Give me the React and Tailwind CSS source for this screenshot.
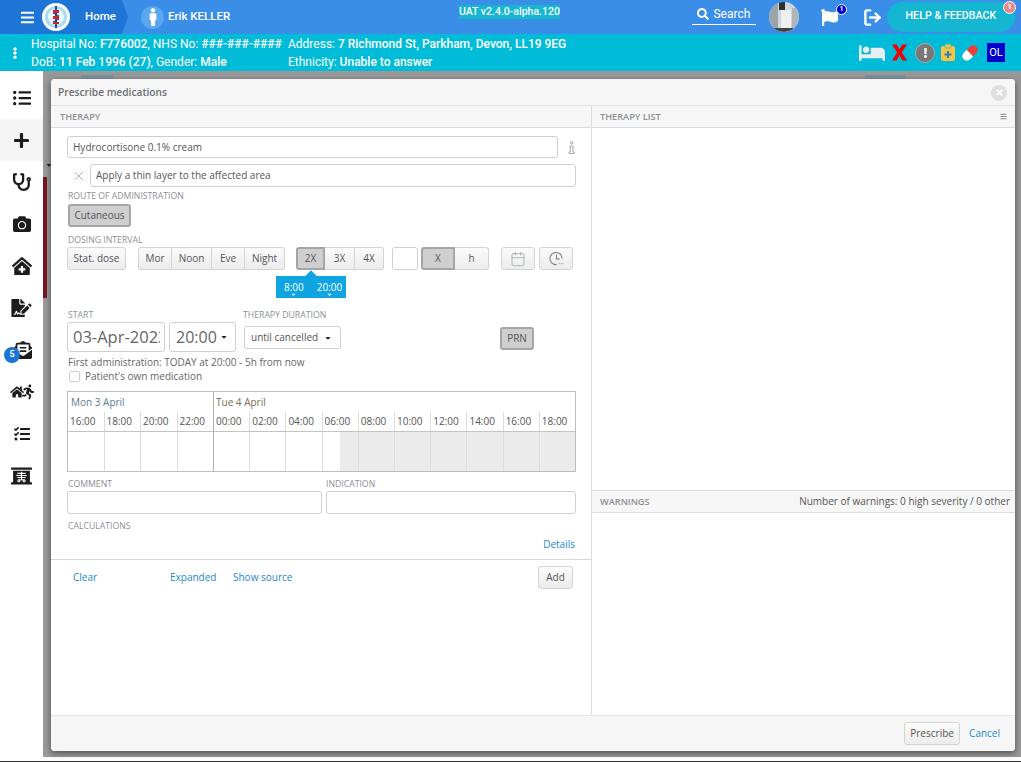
import { FaBars, FaBed, FaCamera, FaClinicMedical, FaFileSignature, FaFlag, FaHome, FaListUl, FaMale, FaPlus, FaRunning, FaSearch, FaStethoscope, FaTasks, FaXRay, FaEnvelopeOpenText, FaTimes, FaExclamation, FaEllipsisV, FaCaretDown } from "react-icons/fa";
import { LuLogOut, LuCalendar, LuX } from "react-icons/lu";

const times = ["16:00", "18:00", "20:00", "22:00", "00:00", "02:00", "04:00", "06:00", "08:00", "10:00", "12:00", "14:00", "16:00", "18:00"];

const btn = "h-[23px] flex items-center justify-center border border-[#d4d4d4] bg-gradient-to-b from-[#fbfbfb] to-[#ececec] text-[#555] text-[10px]";
const btnOn = "h-[23px] flex items-center justify-center border-2 border-[#a5a5a5] bg-[#cfcfcf] text-[#555] text-[10px]";
const label = "text-[8.7px] leading-[12px] pl-[1px] text-[#8b8f96] uppercase";
const input = "border border-[#cfcfcf] rounded-[3px] bg-white text-[#555] text-[10px]";

function Logo() {
  return (
    <svg viewBox="0 0 28 28" className="w-[28px] h-[28px] shrink-0">
      <circle cx="14" cy="14" r="14" fill="#fff" />
      <circle cx="14" cy="14" r="11" fill="#a8dcf2" />
      <circle cx="14" cy="14" r="8" fill="#eaf7fc" />
      <rect x="13" y="3" width="2" height="22" fill="#1f4e8c" />
      <path d="M11 7h6v3h-6zM11 13h6v3h-6zM11 19h6v2h-6z" fill="#d3202f" />
      <path d="M11 10l6 3M17 16l-6 3" stroke="#1f4e8c" strokeWidth="1.200" />
    </svg>
  );
}

function Avatar() {
  return (
    <svg viewBox="0 0 30 30" className="w-[30px] h-[30px] shrink-0 rounded-full">
      <rect width="30" height="30" fill="#cfd6da" />
      <rect x="0" y="0" width="9" height="30" fill="#9aa5ab" />
      <rect x="10" y="0" width="6" height="8" fill="#2b3236" />
      <rect x="12" y="8" width="10" height="22" fill="#eef1f2" />
      <rect x="23" y="6" width="7" height="24" fill="#aeb8bc" />
      <rect x="4" y="26" width="20" height="4" fill="#444" />
    </svg>
  );
}

function Pill() {
  return (
    <svg viewBox="0 0 20 20" className="w-[18px] h-[18px] ml-[6px]">
      <g transform="rotate(-45 10 10)">
        <path d="M5 5h5v10H5a5 5 0 0 1 0-10z" fill="#fff" />
        <path d="M10 5h5a5 5 0 0 1 0 10h-5z" fill="#ef3e36" />
      </g>
    </svg>
  );
}

function ClipboardPlus() {
  return (
    <svg viewBox="0 0 14 17" className="w-[14px] h-[17px] ml-[6px]">
      <rect x="0" y="2" width="14" height="15" rx="2" fill="#f5c542" />
      <rect x="4" y="0" width="6" height="4" rx="1" fill="#f5c542" stroke="#00bcd8" strokeWidth=".6" />
      <path d="M6 7h2v2.500h2.500v2H8V14H6v-2.500H3.500v-2H6z" fill="#2a7fb8" />
    </svg>
  );
}

function RedX() {
  return (
    <svg viewBox="0 0 16 17" className="w-[15px] h-[17px] ml-[7px]">
      <path d="M0 0h5l3 5 3-5h5l-5.500 8.500L16 17h-5l-3-5.500L5 17H0l5.500-8.500z" fill="#f00000" />
    </svg>
  );
}

function InfoOutline() {
  return (
    <svg viewBox="0 0 7 13" className="ml-[10px] w-[7px] h-[13px]" fill="none" stroke="#a8a8a8" strokeWidth="1">
      <circle cx="3.800" cy="1.800" r="1.300" />
      <path d="M2 5h3v6h1.200v1.500H1V11h1.300V6.500H2z" />
    </svg>
  );
}

function ClockDots() {
  return (
    <svg viewBox="0 0 16 16" className="w-[15px] h-[15px]" fill="none" stroke="#777" strokeWidth="1.100">
      <path d="M14 8a6.500 6.500 0 1 0-6 6.500" />
      <path d="M8 4v4.500h3.500" />
      <path d="M10.500 13.500h.8M12.500 13.500h.8M14.500 13.500h.8" strokeWidth="1" />
    </svg>
  );
}

function Header() {
  return (
    <div className="h-[34px] bg-[#3a8ee8] flex items-center text-white font-['Roboto',sans-serif] shrink-0">
      <div className="h-full w-[128px] bg-[#1e75d6] flex items-center pl-[20px] shrink-0 [clip-path:polygon(0_0,122px_0,128px_50%,122px_100%,0_100%)]">
        <FaBars className="w-[15px] h-[15px] mr-[7px]" />
        <Logo />
        <span className="ml-[15px] text-[11.5px] font-medium">Home</span>
      </div>
      <div className="ml-[13px] w-[23px] h-[23px] rounded-full bg-[#5aa7f0] flex items-center justify-center">
        <FaMale className="w-[16px] h-[18px]" />
      </div>
      <span className="ml-[4px] text-[11.5px] font-medium w-[291px]">Erik KELLER</span>
      <span className="mb-[10px] text-[10.500px] font-medium bg-[#14b6d2] leading-[14px]">UAT v2.4.0-alpha.120</span>
      <div className="ml-[132px] mb-[6px] w-[64px] h-[21px] border-b border-white flex items-center justify-center gap-[4px] text-[12px]">
        <FaSearch className="w-[12px] h-[12px]" />
        Search
      </div>
      <div className="ml-[13px]"><Avatar /></div>
      <div className="ml-[22px] relative">
        <FaFlag className="w-[17px] h-[17px]" />
        <span className="absolute -top-[5px] -right-[9px] w-[11px] h-[11px] rounded-full bg-[#0000d0] border border-white text-[7px] font-bold flex items-center justify-center">1</span>
      </div>
      <LuLogOut className="ml-[25px] w-[19px] h-[19px]" strokeWidth={3} />
      <div className="ml-[5px] -mt-[1px] w-[128px] h-[30px] rounded-full bg-[#14b6d2] text-[10.700px] font-medium flex items-center justify-center relative">
        HELP &amp; FEEDBACK
        <span className="absolute -top-[1px] right-[-1px] w-[13px] h-[13px] rounded-full bg-[#e98a8a] border border-white text-[8px] font-bold flex items-center justify-center">1</span>
      </div>
    </div>
  );
}

function PatientBar() {
  return (
    <div className="h-[37px] bg-[#00bcd8] flex items-center text-white font-['Roboto',sans-serif] text-[12px] leading-[18px] whitespace-nowrap shrink-0">
      <FaEllipsisV className="ml-[11px] w-[8px] h-[12px]" />
      <div className="ml-[12px] w-[257px]">
        <div>Hospital No: <b className="font-medium">F776002</b>, NHS No: <b className="font-medium">###-###-####</b></div>
        <div>DoB: <b className="font-medium">11 Feb 1996 (27)</b>, Gender: <b className="font-medium">Male</b></div>
      </div>
      <div className="flex-1">
        <div>Address: <b className="font-medium">7 Richmond St, Parkham, Devon, LL19 9EG</b></div>
        <div>Ethnicity: <b className="font-medium">Unable to answer</b></div>
      </div>
      <div className="flex items-center mr-[16px]">
        <FaBed className="w-[26px] h-[22px] text-[#e6eef5]" />
        <RedX />
        <span className="ml-[8px] w-[20px] h-[20px] rounded-full bg-[#777] border border-[#aaa] flex items-center justify-center"><FaExclamation className="w-[9px] h-[10px] text-[#eee]" /></span>
        <ClipboardPlus />
        <Pill />
        <span className="ml-[8px] w-[18px] h-[19px] bg-[#0000c8] text-[11px] flex items-center justify-center">OL</span>
      </div>
    </div>
  );
}

function Sidebar() {
  const icons = [
    <FaListUl className="w-[18px] h-[18px]" />,
    <FaPlus className="w-[17px] h-[17px]" />,
    <FaStethoscope className="w-[18px] h-[18px]" />,
    <FaCamera className="w-[18px] h-[18px]" />,
    <FaClinicMedical className="w-[20px] h-[18px]" />,
    <FaFileSignature className="w-[21px] h-[18px]" />,
    <FaEnvelopeOpenText className="w-[18px] h-[18px] ml-[2px]" />,
    <span className="flex items-center"><FaHome className="w-[14px] h-[14px]" /><FaRunning className="w-[12px] h-[18px] -ml-[2px]" /></span>,
    <FaTasks className="w-[18px] h-[16px]" />,
    <FaXRay className="w-[21px] h-[18px]" />,
  ];
  return (
    <div className="w-[43px] bg-white shrink-0 flex flex-col pt-[6px] text-[#1c1c1c] relative z-10">
      {icons.map((icon, i) => (
        <div key={i} className={`h-[42px] flex items-center justify-center relative shrink-0 ${i === 1 ? "bg-[#f5f5f5]" : ""}`}>
          {icon}
          {i === 6 && <span className="absolute left-[4px] top-[18px] w-[16px] h-[16px] rounded-full bg-[#1976d2] text-white text-[9px] font-bold flex items-center justify-center font-['Roboto',sans-serif]">5</span>}
        </div>
      ))}
    </div>
  );
}

function Timeline() {
  return (
    <div className="mt-[8px] border border-[#bdbdbd] h-[81px] flex text-[10px] leading-[15px] text-[#555]">
      <div className="w-[146px] border-r border-[#b0b0b0] flex flex-col shrink-0">
        <div className="h-[20px] pl-[3px] pt-[3px] text-[#5d7c92]">Mon 3 April</div>
        <div className="h-[20px] flex border-b border-[#c4c4c4]">
          {times.slice(0, 4).map((t, i) => (
            <span key={i} className={`flex-1 pl-[2px] pt-[2px] ${i ? "border-l border-[#ddd]" : ""}`}>{t}</span>
          ))}
        </div>
        <div className="flex-1 flex">
          {times.slice(0, 4).map((t, i) => (
            <span key={i} className={`flex-1 ${i ? "border-l border-[#ddd]" : ""}`} />
          ))}
        </div>
      </div>
      <div className="flex-1 flex flex-col">
        <div className="h-[20px] pl-[2px] pt-[3px] text-[#7a6a55]">Tue 4 April</div>
        <div className="h-[20px] flex border-b border-[#c4c4c4]">
          {times.slice(4).map((t, i) => (
            <span key={i} className={`flex-1 pl-[2px] pt-[2px] ${i ? "border-l border-[#ddd]" : ""}`}>{t}</span>
          ))}
        </div>
        <div className="flex-1 flex">
          {times.slice(4).map((t, i) => (
            <span key={i} className={`flex-1 flex ${i ? "border-l border-[#ddd]" : ""} ${i > 3 ? "bg-[#ebebeb]" : ""}`}>
              {i === 3 && <span className="ml-auto w-[18px] bg-[#ebebeb]" />}
            </span>
          ))}
        </div>
      </div>
    </div>
  );
}

function TherapyForm() {
  return (
    <div className="w-[541px] border-r border-[#ddd] flex flex-col shrink-0">
      <div className="flex-1 pl-[16px] pr-[15px] pt-[8px]">
        <div className="flex items-center">
          <div className={`${input} w-[491px] h-[22px] flex items-center pl-[5px]`}>Hydrocortisone 0.1% cream</div>
          <InfoOutline />
        </div>
        <div className="flex items-center mt-[6px]">
          <LuX className="ml-[5px] w-[14px] h-[14px] text-[#999]" strokeWidth={1.300} />
          <div className={`${input} ml-[4px] w-[486px] h-[23px] flex items-center pl-[5px]`}>Apply a thin layer to the affected area</div>
        </div>
        <div className={`${label} mt-[3px]`}>Route of administration</div>
        <div className={`${btnOn} rounded-[3px] w-[63px] h-[22px] mt-[2px] ml-[1px]`}>Cutaneous</div>
        <div className={`${label} mt-[7px]`}>Dosing interval</div>
        <div className="flex items-start mt-[1px]">
          <div className={`${btn} rounded-[3px] w-[59px]`}>Stat. dose</div>
          <div className="flex ml-[12px]">
            <div className={`${btn} rounded-l-[3px] w-[34px]`}>Mor</div>
            <div className={`${btn} border-l-0 w-[40px]`}>Noon</div>
            <div className={`${btn} border-l-0 w-[33px]`}>Eve</div>
            <div className={`${btn} border-l-0 rounded-r-[3px] w-[40px]`}>Night</div>
          </div>
          <div className="ml-[11px] relative">
            <div className="flex">
              <div className={`${btnOn} rounded-l-[3px] w-[29px]`}>2X</div>
              <div className={`${btn} border-l-0 w-[30px]`}>3X</div>
              <div className={`${btn} border-l-0 rounded-r-[3px] w-[29px]`}>4X</div>
            </div>
            <div className="absolute left-[-20px] top-[29px] w-[70px] h-[22px] bg-[#0ea5e0] text-white text-[10px] flex items-center gap-[13px] pl-[8px]">
              <span className="absolute left-[31px] -top-[4px] w-[8px] h-[8px] rotate-45 bg-[#0ea5e0]" />
              <span className="relative">8:00<FaCaretDown className="absolute left-[6px] top-[11px] w-[7px] h-[7px]" /></span>
              <span className="relative">20:00<FaCaretDown className="absolute left-[9px] top-[11px] w-[7px] h-[7px]" /></span>
            </div>
          </div>
          <div className={`${input} ml-[8px] w-[26px] h-[23px]`} />
          <div className="flex ml-[3px]">
            <div className={`${btnOn} rounded-l-[3px] w-[34px]`}>X</div>
            <div className={`${btn} border-l-0 rounded-r-[3px] w-[34px]`}>h</div>
          </div>
          <div className={`${btn} rounded-[3px] ml-[12px] w-[34px]`}><LuCalendar className="w-[16px] h-[16px] text-[#8a979e]" strokeWidth={1} /></div>
          <div className={`${btn} rounded-[3px] ml-[4px] w-[34px]`}><ClockDots /></div>
        </div>
        <div className="flex mt-[39px] items-start">
          <div className="w-[176px]">
            <div className={label}>Start</div>
            <div className="flex mt-[1px] gap-[4px]">
              <div className={`${input} w-[98px] h-[30px] pl-[5px] text-[16.500px] leading-[28px] text-[#666]`}>
                <span className="block w-[87px] overflow-hidden whitespace-nowrap">03-Apr-2023</span>
              </div>
              <div className={`${input} w-[67px] h-[30px] pl-[6px] text-[16px] text-[#666] flex items-center`}>20:00<FaCaretDown className="ml-[3px] w-[8px] h-[8px] text-[#222]" /></div>
            </div>
          </div>
          <div className="ml-[1px]">
            <div className={`${label} -ml-[2px]`}>Therapy duration</div>
            <div className={`${input} mt-[5px] w-[97px] h-[23px] flex items-center pl-[6px]`}>until cancelled<FaCaretDown className="ml-[6px] w-[8px] h-[8px] text-[#222]" /></div>
          </div>
          <div className={`${btnOn} rounded-[3px] w-[34px] h-[22px] ml-[159px] mt-[18px]`}>PRN</div>
        </div>
        <div className="text-[10px] text-[#666] mt-[3px] ml-[1px] leading-[14px]">First administration: TODAY at 20:00 - 5h from now</div>
        <div className="flex items-center text-[10px] text-[#666] leading-[14px]">
          <span className="ml-[2px] w-[11px] h-[11px] border border-[#ccc] rounded-[2px]" />
          <span className="ml-[5px]">Patient's own medication</span>
        </div>
        <Timeline />
        <div className="flex gap-[4px] mt-[6px]">
          <div className="w-[255px]">
            <div className={label}>Comment</div>
            <div className={`${input} h-[23px] mt-[1px]`} />
          </div>
          <div className="flex-1">
            <div className={`${label} -ml-[1px]`}>Indication</div>
            <div className={`${input} h-[23px] mt-[1px]`} />
          </div>
        </div>
        <div className={`${label} mt-[6px]`}>Calculations</div>
        <div className="text-right text-[10px] text-[#1b87c9] mt-[5px] mr-[1px] leading-[14px]">Details</div>
      </div>
      <div className="h-[156px] border-t border-[#d6d6d6] flex items-start pt-[6px] pl-[22px] pr-[18px] text-[10px] text-[#1b87c9] shrink-0">
        <span className="mt-[4px] w-[97px]">Clear</span>
        <span className="mt-[4px] w-[63px]">Expanded</span>
        <span className="mt-[4px]">Show source</span>
        <div className={`${btn} rounded-[3px] ml-auto w-[35px] h-[21px]`}>Add</div>
      </div>
    </div>
  );
}

function RightPanel() {
  return (
    <div className="flex-1 flex flex-col">
      <div className="flex-1" />
      <div className="h-[23px] bg-[#f7f7f7] border-y border-[#ddd] flex items-center justify-between pl-[8px] pr-[5px] shrink-0">
        <span className="text-[9.200px] font-semibold text-[#8b8f96]">WARNINGS</span>
        <span className="text-[10px] text-[#555]">Number of warnings: 0 high severity / 0 other</span>
      </div>
      <div className="h-[202px] shrink-0" />
    </div>
  );
}

function Modal() {
  return (
    <div className="h-[672px] bg-white rounded-[4px] shadow-[0_2px_6px_rgba(0,0,0,0.5)] flex flex-col font-['Open_Sans',sans-serif] overflow-hidden relative">
      <div className="h-[27px] pt-[1px] bg-[#f6f6f6] border-b border-[#e2e2e2] flex items-center justify-between pl-[7px] pr-[8px] shrink-0">
        <span className="text-[10.200px] font-semibold text-[#6b7075]">Prescribe medications</span>
        <span className="w-[16px] h-[16px] rounded-full bg-[#dfdfdf] flex items-center justify-center"><FaTimes className="w-[9px] h-[9px] text-white" /></span>
      </div>
      <div className="h-[22px] bg-[#f7f7f7] border-b border-[#ddd] flex shrink-0 text-[9.200px] font-semibold text-[#8b8f96]">
        <div className="w-[541px] border-r border-[#ddd] pl-[9px] flex items-center">THERAPY</div>
        <div className="flex-1 pl-[8px] pr-[8px] flex items-center justify-between">THERAPY LIST<FaBars className="w-[7px] h-[7px] text-[#888]" /></div>
      </div>
      <div className="flex-1 flex min-h-0">
        <TherapyForm />
        <RightPanel />
      </div>
      <div className="h-[36px] bg-[#f6f6f6] border-t border-[#e6e6e6] flex items-center justify-end pr-[15px] shrink-0">
        <div className={`${btn} rounded-[3px] w-[56px] h-[22px]`}>Prescribe</div>
        <span className="ml-[9px] text-[10px] text-[#1b87c9]">Cancel</span>
      </div>
    </div>
  );
}

export default function App() {
  return (
    <div className="w-[1021px] h-[762px] flex flex-col overflow-hidden bg-white">
      <Header />
      <PatientBar />
      <div className="flex-1 flex min-h-0">
        <Sidebar />
        <div className="flex-1 flex flex-col min-w-0">
          <div className="flex-1 bg-[#999] pt-[8px] pl-[8px] pr-[6px] relative">
            {/* page behind the dialog, seen through the backdrop */}
            <div className="absolute left-[38px] top-[4px] w-[32px] h-[4px] bg-[#7e929f]" />
            <div className="absolute left-[822px] top-[4px] w-[40px] h-[4px] bg-[#7e929f]" />
            <div className="absolute left-[0px] top-[106px] w-[4px] h-[121px] bg-[#7a1420]" />
            <FaCaretDown className="absolute left-[2px] top-[90px] w-[8px] h-[8px] text-[#222]" />
            <Modal />
          </div>
          <div className="h-[4px] bg-white shrink-0" />
        </div>
      </div>
      <div className="h-[1px] bg-[#333] shrink-0" />
    </div>
  );
}
